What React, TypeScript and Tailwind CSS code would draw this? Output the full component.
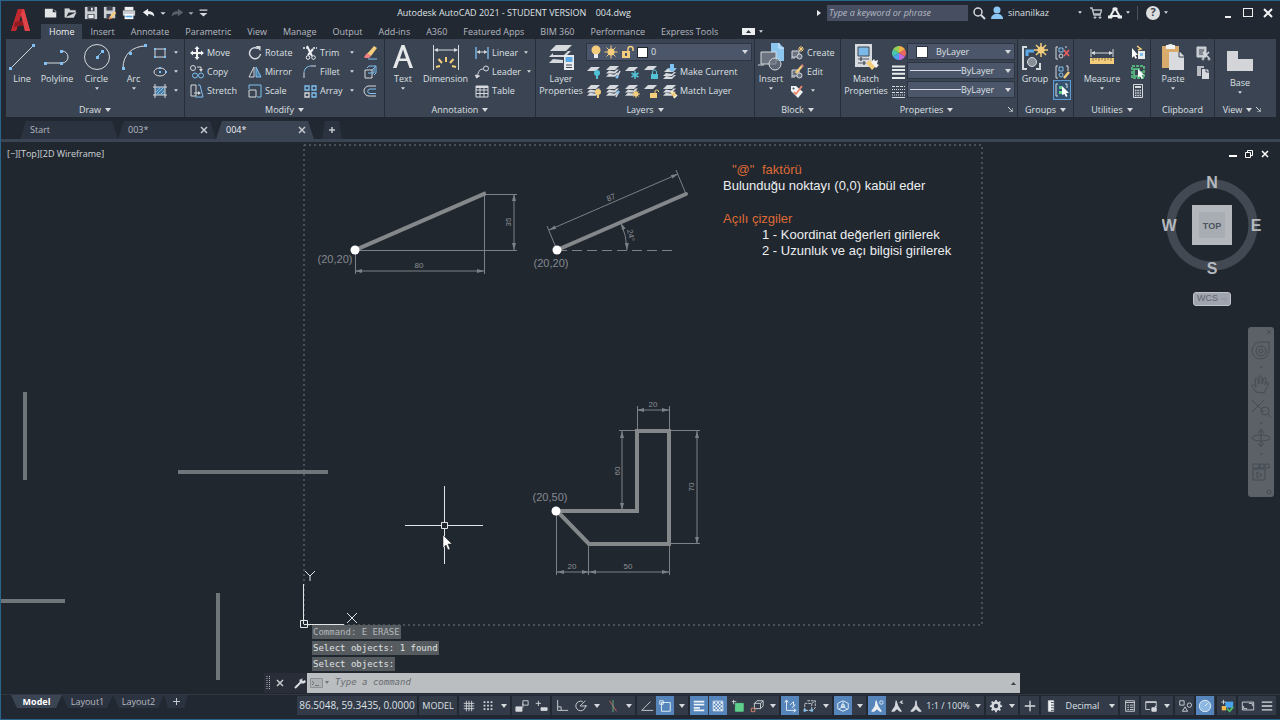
import type { ReactNode } from 'react';
import clsx from 'clsx';

const LIGHT = '#d6d9dd';
const BLUE = '#7fc1f2';
const GOLD = '#f3cd7c';
const GREEN = '#5fd08b';

const layerStack = (
  <g fill={LIGHT}>
    <path d="M5 2h9l-4 4H1z" />
    <path d="M4 6.500l-3 3h9l4-4h-2.500l-2 2z" />
    <path d="M4 9.800l-3 3h9l4-4h-2.500l-2 2z" />
  </g>
);

const smallIcons: Record<string, ReactNode> = {
  rect: (
    <g>
      <path d="M3 4h10v8H3z" fill="none" stroke={LIGHT} />
      <path d="M2 3h2v2H2zM12 11h2v2h-2zM12 3h2v2h-2zM2 11h2v2H2z" fill={BLUE} />
    </g>
  ),
  ellipse: (
    <g>
      <ellipse cx="8" cy="8" rx="6" ry="4" fill="none" stroke={LIGHT} />
      <path d="M7 7h2v2H7zM13 7h2v2h-2zM7 3h2v2H7z" fill={BLUE} />
    </g>
  ),
  hatch: (
    <g fill="none">
      <path d="M3 4h10v8H3z" fill="#4c7ba0" />
      <path d="M3 1v14M13 1v14M1 4h14M1 12h14" stroke={LIGHT} />
      <path d="M4 9l4-4M5 11l6-6M9 11l3-3" stroke={BLUE} />
    </g>
  ),
  move: (
    <path d="M8 1l2.500 3H9v3h3V5.500L15 8l-3 2.500V9H9v3h1.500L8 15l-2.500-3H7V9H4v1.500L1 8l3-2.500V7h3V4H5.500z" fill="#f0f2f4" />
  ),
  copy: (
    <g fill="none">
      <circle cx="4" cy="4" r="2.500" stroke={LIGHT} />
      <path d="M8 3h4v3" stroke={LIGHT} />
      <path d="M10 5h4l-2 3z" fill={LIGHT} />
      <circle cx="6" cy="11.500" r="2.500" stroke={BLUE} />
      <circle cx="12" cy="11.500" r="2.500" stroke={BLUE} />
    </g>
  ),
  stretch: (
    <g fill="none">
      <path d="M2 2h5v11H2z" stroke={LIGHT} />
      <path d="M9 2h2l3 12H6" stroke={BLUE} />
      <path d="M5 10h5" stroke={LIGHT} />
      <path d="M9 8l3 2-3 2z" fill={LIGHT} />
    </g>
  ),
  rotate: (
    <g fill="none">
      <path d="M11 3.500A5.500 5.500 0 1 0 13.500 9" stroke={LIGHT} strokeWidth="1.500" />
      <path d="M8.500 1h5v5z" fill={LIGHT} />
    </g>
  ),
  mirror: (
    <g fill="none">
      <path d="M7 3v10H2z" stroke={LIGHT} />
      <path d="M9 3v10h5z" fill="#4c7ba0" stroke={BLUE} />
    </g>
  ),
  scale: (
    <g fill="none">
      <path d="M2 6V2h12v12h-4" stroke={BLUE} />
      <path d="M2 7h7v7H2z" stroke={LIGHT} />
    </g>
  ),
  trim: (
    <g fill="none" stroke="#f0f2f4">
      <path d="M1 3h4M11 3h4" strokeWidth="1.500" strokeDasharray="2 1" />
      <path d="M5 1l5 10M11 4L6 10" strokeWidth="2" />
      <circle cx="6" cy="12.500" r="1.800" />
      <circle cx="11.500" cy="12.500" r="1.800" />
    </g>
  ),
  fillet: (
    <g fill="none">
      <path d="M2 14V9" stroke={LIGHT} />
      <path d="M2 9c0-4 3-7 7-7" stroke={BLUE} />
      <path d="M9 2h5" stroke={LIGHT} />
    </g>
  ),
  array: (
    <g fill="none">
      <path d="M3 3h4v4H3zM10 10h4v4h-4zM10 3h4v4h-4z" stroke={BLUE} strokeWidth="1.300" />
      <path d="M3 10h4v4H3z" stroke={LIGHT} strokeWidth="1.300" />
    </g>
  ),
  erase: (
    <g>
      <path d="M12 1l3 2-6 8-4-2z" fill={GOLD} />
      <path d="M5 8l4 3-2 2H3l-1-1z" fill="#ef8080" />
      <path d="M6 14h9" stroke={BLUE} />
    </g>
  ),
  explode: (
    <g fill="none">
      <path d="M5 4l2-2h7v7l-2 2" stroke={BLUE} />
      <path d="M3 6h7v8H3z" stroke={LIGHT} />
      <path d="M6 9h6V4" stroke={BLUE} />
      <path d="M10 6l4-4" stroke={BLUE} />
    </g>
  ),
  offset: (
    <g fill="none">
      <path d="M14 3H7a5 5 0 0 0 0 10h7" stroke={LIGHT} />
      <path d="M14 6H8a2 2 0 0 0 0 4.500h6" stroke={BLUE} />
    </g>
  ),
  linear: (
    <g fill="none">
      <path d="M2 2v12M14 2v12" stroke={BLUE} strokeWidth="1.300" />
      <path d="M3 7h10" stroke={LIGHT} />
      <path d="M3 7l3-2v4zM13 7l-3-2v4z" fill={LIGHT} />
    </g>
  ),
  leader: (
    <g fill="none" stroke={LIGHT}>
      <circle cx="12" cy="4.500" r="2.500" />
      <path d="M9.500 5c-4 0-5 2-6 7" />
      <path d="M1.500 11l1 3 3-2z" fill={LIGHT} />
    </g>
  ),
  table: (
    <g fill="none" stroke={LIGHT}>
      <path d="M2 3h12v11H2zM2 7h12M2 10.500h12M6 5v9M10 5v9" />
      <path d="M2 4h12" strokeWidth="2" />
    </g>
  ),
  layerOff: (
    <g>
      <path d="M5 3h9l-4 4H1z" fill={LIGHT} />
      <circle cx="11" cy="9" r="3" fill="#52c3d6" />
      <path d="M10 12h2v3h-2z" fill="#52c3d6" />
    </g>
  ),
  layerIso: (
    <g>
      {layerStack}
      <path d="M15 7l-3 6" stroke={LIGHT} strokeWidth="1.500" />
      <circle cx="12" cy="13" r="1.500" fill={BLUE} />
    </g>
  ),
  layerFreeze: (
    <g>
      <path d="M5 3h9l-4 4H1z" fill={LIGHT} />
      <path d="M11 7v8M7.500 9l7 4M14.500 9l-7 4" stroke="#52c3d6" strokeWidth="1.500" />
    </g>
  ),
  layerLock: (
    <g>
      <path d="M5 2h9l-4 4H1z" fill={LIGHT} />
      <path d="M8 10h7v5H8z" fill="#52c3d6" />
      <path d="M9.500 10V8a2 2 0 0 1 4 0v2" fill="none" stroke="#52c3d6" />
    </g>
  ),
  makeCurrent: (
    <g>
      <path d="M5 5h9l-3 3H2zM4 9l-3 3h9l4-4h-2l-2 2zM4 12l-3 3h9l4-4h-2l-2 2z" fill={LIGHT} />
      <path d="M8 0h4v4h3l-5 4-5-4h3z" fill={BLUE} />
    </g>
  ),
  layerOn: (
    <g>
      {layerStack}
      <circle cx="12" cy="9" r="3" fill={GOLD} />
      <path d="M11 12h2v3h-2z" fill={GOLD} />
    </g>
  ),
  layerUniso: (
    <g>
      {layerStack}
      <path d="M14 8l-3 6" stroke={LIGHT} strokeWidth="1.500" />
      <circle cx="13" cy="9" r="1.500" fill={BLUE} />
    </g>
  ),
  layerThaw: (
    <g>
      {layerStack}
      <circle cx="12" cy="11" r="2.500" fill={GOLD} />
      <path d="M12 7v8M8 11h8M9.500 8.500l5 5M14.500 8.500l-5 5" stroke={GOLD} />
    </g>
  ),
  layerUnlock: (
    <g>
      <path d="M5 2h9l-4 4H1z" fill={LIGHT} />
      <path d="M7 10h7v5H7z" fill={GOLD} />
      <path d="M12 10V8a2 2 0 0 1 3.500 0v1" fill="none" stroke={GOLD} />
    </g>
  ),
  matchLayer: (
    <g>
      {layerStack}
      <path d="M8 9l3-1 4 4-3 3z" fill={GOLD} />
      <path d="M9 8l2 2M12 15l3-3" stroke="#f6f1e4" strokeWidth="1.500" />
    </g>
  ),
  create: (
    <g fill="none">
      <path d="M3 6h7v6H3z" stroke={LIGHT} fill="#6b7380" />
      <circle cx="10.500" cy="11.500" r="2.500" stroke={LIGHT} fill="#6b7380" />
      <path d="M2 13h4" stroke={LIGHT} />
      <path d="M12 1v6M9 4h6M10 2l4 4M14 2l-4 4" stroke={GOLD} />
    </g>
  ),
  edit: (
    <g fill="none">
      <path d="M3 6h7v6H3z" stroke={LIGHT} fill="#6b7380" />
      <circle cx="10.500" cy="11.500" r="2.500" stroke={LIGHT} fill="#6b7380" />
      <path d="M2 13h4" stroke={LIGHT} />
      <path d="M7 9l6-7" stroke={GOLD} strokeWidth="2.500" />
      <path d="M13 2l1-1" stroke="#ef8080" strokeWidth="2.500" />
    </g>
  ),
  attribute: (
    <g>
      <path d="M2 3h5l7 6-5 6-7-7z" fill="#f0f2f4" />
      <path d="M5 9l2 2 6-8" fill="none" stroke="#ef8a6a" strokeWidth="1.800" />
      <circle cx="4.500" cy="5.500" r="1" fill="#3b4453" />
    </g>
  ),
  colorWheel: (
    <g>
      <path d="M8 8V1a7 7 0 0 1 6 3.500z" fill="#f2b24a" />
      <path d="M8 8l6-3.500a7 7 0 0 1 0 7z" fill="#ef6a5a" />
      <path d="M8 8l6 3.500A7 7 0 0 1 8 15z" fill="#c268d8" />
      <path d="M8 8v7a7 7 0 0 1-6-3.500z" fill="#4aa3ef" />
      <path d="M8 8l-6 3.500a7 7 0 0 1 0-7z" fill="#48c8b0" />
      <path d="M8 8L2 4.500A7 7 0 0 1 8 1z" fill="#8ed05a" />
    </g>
  ),
  lineweight: <path d="M1 2.500h13M1 6h13M1 9.800h13M1 14h13" stroke="#e9ebed" strokeWidth="2" />,
  linetype: (
    <g stroke={LIGHT}>
      <path d="M1 3.500h13M1 9.500h13" strokeDasharray="3 1" />
      <path d="M1 6.500h13M1 12h13" strokeDasharray="1 1" />
      <path d="M1 14.500h13" />
    </g>
  ),
  ungroup: (
    <g fill="none">
      <path d="M4 2H2v12h2M11 2h2" stroke={LIGHT} />
      <path d="M5 3h4v4H5z" stroke={BLUE} />
      <circle cx="7" cy="11" r="2" stroke={LIGHT} />
      <path d="M10 5l5 6M15 5l-5 6" stroke="#ef5f5f" strokeWidth="1.500" />
    </g>
  ),
  groupEdit: (
    <g fill="none">
      <path d="M4 2H2v12h2M12 2h2v5" stroke={LIGHT} />
      <path d="M5 3h4v4H5z" stroke={BLUE} />
      <circle cx="7" cy="11" r="2" stroke={BLUE} />
      <path d="M10 14l5-6" stroke={GOLD} strokeWidth="2.500" />
    </g>
  ),
  groupSelect: (
    <g fill="none">
      <path d="M4 2H2v12h2M11 2h2v4" stroke={LIGHT} />
      <path d="M5 4h3v3H5zM5 9h3v3H5z" fill={GREEN} />
      <path d="M8 4l7 7-3 0 1.500 3-1.500 1-1.500-3L8 13z" fill="#fff" />
    </g>
  ),
  quickSelect: (
    <g>
      <path d="M8 6h7v8H8z" fill="#e9ebed" />
      <path d="M10 8h3v3h-3z" fill={BLUE} />
      <path d="M2 3l6 7H5.500L7 13l-1.500.800L4 11l-2 2z" fill="#fff" />
      <path d="M7 1l4 3-3 1" fill="none" stroke={GOLD} strokeWidth="1.500" />
    </g>
  ),
  selectAll: (
    <g fill="none">
      <path d="M2 2h12v12H2z" stroke={GREEN} strokeWidth="1.500" strokeDasharray="3 1" />
      <path d="M4 5h5v3h3v4H4z" stroke={GREEN} strokeWidth="1.500" />
      <path d="M8 5l6 6h-2.500l1.500 3-1.500.800L10 12l-2 1.500z" fill="#fff" />
    </g>
  ),
  calculator: (
    <g fill="none" stroke={LIGHT}>
      <path d="M3.500 1.500h9v13h-9z" />
      <path d="M5 4h6" strokeWidth="2" />
      <path d="M5 7.500h6M5 10h6M5 12.500h6" strokeDasharray="1.500 .8" strokeWidth="1.500" />
    </g>
  ),
  cut: (
    <g fill="none" stroke={LIGHT}>
      <path d="M2 2h9v10H2z" fill="#c3c7cc" />
      <path d="M4 5h5M4 7h5M4 9h4" stroke="#3b4453" />
      <path d="M8 7l6 6M14 7l-6 6" strokeWidth="1.500" />
      <circle cx="14" cy="14" r="1" />
      <circle cx="8" cy="14" r="1" />
    </g>
  ),
  copyClip: (
    <g>
      <path d="M2 2h7v2H6v8H2z" fill="#b8bcc2" />
      <path d="M7 5h5l2 2v8H7z" fill={LIGHT} />
      <path d="M11 5v3h3" fill="none" stroke="#3b4453" />
    </g>
  ),
};

const bigIcons: Record<string, ReactNode> = {
  line: (
    <g>
      <path d="M2 26L26 2" stroke={LIGHT} />
      <path d="M1 24h3v3H1zM24 1h3v3h-3z" fill={BLUE} />
    </g>
  ),
  polyline: (
    <g fill="none">
      <path d="M2 20h17a6 6 0 0 0 0-12" stroke={LIGHT} />
      <path d="M1 19h3v3H1zM17 19h3v3h-3zM17 7h3v3h-3z" fill={BLUE} />
    </g>
  ),
  circle: (
    <g fill="none">
      <circle cx="14" cy="14" r="12.500" stroke={LIGHT} />
      <path d="M14 14l5-5" stroke={BLUE} />
      <path d="M13 13h3v3h-3zM18 7h3v3h-3z" fill={BLUE} />
    </g>
  ),
  arc: (
    <g fill="none">
      <path d="M3 25C3 12 12 3 26 3" stroke={LIGHT} />
      <path d="M2 24h3v3H2zM9 9h3v3H9zM24 1h3v3h-3z" fill={BLUE} />
    </g>
  ),
  text: <path d="M4 25L12.500 2h3L24 25h-3.500l-2.500-7H10l-2.500 7zM11 15.500h6L14 6.500z" fill="#e6e8ea" fillRule="evenodd" />,
  dimension: (
    <g fill="none">
      <path d="M1.500 2v25M26.500 2v25M3 7h22" stroke={LIGHT} />
      <path d="M2 7l4-2v4zM26 7l-4-2v4z" fill={LIGHT} />
      <path d="M14 19v-5M18 20l3.500-4M10 20l-3.500-4M20 23l4 1M8 23l-4 1" stroke={GOLD} strokeWidth="2" />
    </g>
  ),
  layerProps: (
    <g>
      <path d="M9 2h16l-6 6H3z" fill={LIGHT} />
      <path d="M6 10l-4 4h16l6-6h-3l-4 4H6z" fill={LIGHT} />
      <path d="M6 16l-4 4h14v-3z" fill={LIGHT} />
      <path d="M17 12h10v15H17z" fill="#e9ebed" />
      <path d="M18.500 14h7v5h-7z" fill="#5aa9e6" />
      <path d="M19 22h6M19 24.500h6" stroke="#3b4453" />
    </g>
  ),
  insert: (
    <g>
      <path d="M14 0h8l5 5v13H14z" fill="#8cc6ef" />
      <path d="M22 0v5h5" fill="none" stroke="#dbeefb" />
      <path d="M4 9h15v12H4z" fill="#6b7380" stroke={LIGHT} />
      <circle cx="18" cy="21" r="6" fill="#6b7380" fillOpacity=".7" stroke={LIGHT} />
      <path d="M1 22h6" stroke={LIGHT} />
    </g>
  ),
  matchProps: (
    <g>
      <path d="M3 1h17v23H3z" fill={LIGHT} />
      <path d="M6 4h11v9H6z" fill="#7db9e8" stroke="#3b4453" />
      <path d="M6 16h11M6 20h8" stroke="#4c5563" />
      <path d="M9 14v4M12 18v4" stroke="#4c5563" strokeWidth="1.500" />
      <path d="M14 20l4-3 6 6-4 4z" fill={GOLD} />
      <path d="M19 19l3-3 1 2 3-1-1 4 2 1-3 3z" fill="#f2f3f4" />
    </g>
  ),
  group: (
    <g fill="none">
      <path d="M6 4H2v22h4M15 26h4v-6" stroke={LIGHT} strokeWidth="2" />
      <path d="M6 13V8h7" stroke="#5aa9e6" strokeWidth="3" />
      <circle cx="11" cy="19" r="4.500" fill="#8a9099" stroke={LIGHT} />
      <path d="M20 0v14M13 7h14M15 2l10 10M25 2L15 12" stroke={GOLD} strokeWidth="1.500" />
      <circle cx="20" cy="7" r="3.500" fill={GOLD} />
    </g>
  ),
  measure: (
    <g fill="none">
      <path d="M3 6v8M25 6v8M4 10h20" stroke={LIGHT} />
      <path d="M3 10l4-2v4zM25 10l-4-2v4z" fill={LIGHT} />
      <path d="M2 15h24v6H2z" fill={GOLD} />
      <path d="M5 15v3M8 15v2M11 15v3M14 15v2M17 15v3M20 15v2M23 15v3" stroke="#8a7644" />
    </g>
  ),
  paste: (
    <g>
      <path d="M3 3h17v22H3z" fill="#d9ab6c" />
      <path d="M7 2h2a3 2 0 0 1 5 0h2v4H7z" fill="#f0f2f4" />
      <path d="M10 9h11l4 4v14H10z" fill="#d9dbde" />
      <path d="M20 9v5h5" fill="none" stroke="#3b4453" />
    </g>
  ),
  base: <path d="M1 4h11v8h15v12H1z" fill="#d3d5d8" />,
};

const Caret = ({ wide = false }: { wide?: boolean }) => (
  <svg width={wide ? 6 : 4} height={wide ? 4 : 3} viewBox="0 0 6 4" className="shrink-0" aria-hidden="true">
    <path d="M0 0h6L3 4z" fill="#d6d9dd" />
  </svg>
);

const Icon = ({ name }: { name: string }) => (
  <svg width="16" height="16" viewBox="0 0 16 16" className="size-4 shrink-0" aria-hidden="true">
    {smallIcons[name]}
  </svg>
);

interface SmallButtonProps {
  icon: string;
  label?: string;
  menu?: boolean;
  active?: boolean;
  title?: string;
}

const SmallButton = ({ icon, label, menu, active, title }: SmallButtonProps) => (
  <button
    type="button"
    aria-label={label ?? title}
    className={clsx(
      'flex items-center gap-0.5 whitespace-nowrap',
      active ? 'h-[18px] bg-[#35536f] outline outline-[#5f9bd0]' : 'h-[19px]'
    )}
  >
    <Icon name={icon} />
    {label && <span>{label}</span>}
    {menu && (
      <span className="ml-1 flex grow justify-end">
        <Caret />
      </span>
    )}
  </button>
);

interface BigButtonProps {
  icon: string;
  label: string;
  width: string;
  menu?: boolean;
  low?: boolean;
}

const BigButton = ({ icon, label, width, menu, low }: BigButtonProps) => (
  <button type="button" className={clsx('flex shrink-0 flex-col items-center', width, low && 'pt-1')}>
    <svg width="28" height="28" viewBox="0 0 28 28" className="size-7" aria-hidden="true">
      {bigIcons[icon]}
    </svg>
    <span className="mt-0.5 leading-3">{label}</span>
    {menu && (
      <span className="mt-0.5">
        <Caret />
      </span>
    )}
  </button>
);

interface PanelProps {
  title: string;
  width: string;
  menu?: boolean;
  launcher?: boolean;
  children: ReactNode;
}

const Panel = ({ title, width, menu = true, launcher, children }: PanelProps) => (
  <section className={clsx('flex shrink-0 flex-col border-[#272e3a] pt-1 not-last:border-r', width)}>
    <div className="flex h-[57px]">{children}</div>
    <div className="flex h-[17px] items-center px-1 pt-0.5">
      <button type="button" className="flex grow items-center justify-center gap-1">
        {title}
        {menu && <Caret wide />}
      </button>
      {launcher && (
        <svg width="5" height="5" viewBox="0 0 5 5" aria-hidden="true">
          <path d="M0 0l4 4M5 1v4H1" fill="none" stroke={LIGHT} />
        </svg>
      )}
    </div>
  </section>
);

const LinePicker = ({ label }: { label: string }) => (
  <div className="relative flex h-[17px] w-[108px] items-center border border-[#2d3542] bg-[#4b566a]">
    <span className="ml-0.5 h-px w-[51px] bg-[#d6d9dd]" />
    <select aria-label={label} className="w-[52px] grow appearance-none bg-transparent outline-none">
      <option>ByLayer</option>
      <option>ByBlock</option>
    </select>
    <span className="pointer-events-none absolute right-[3px]">
      <Caret wide />
    </span>
  </div>
);

const menuTabs = [
  'Home', 'Insert', 'Annotate', 'Parametric', 'View', 'Manage', 'Output', 'Add-ins',
  'A360', 'Featured Apps', 'BIM 360', 'Performance', 'Express Tools'
];

const quickTools: { name: string; width: string; art: ReactNode }[] = [
  { name: 'New', width: 'w-5', art: <path d="M1 3h9l4 3v7H1zM10 3v4h4" fill="#e2e4e6" /> },
  { name: 'Open', width: 'w-5', art: <path d="M1 13V3h5l1 2h6v2H5l-3 6h9l3-6" fill="#d0d3d6" stroke="#f0f1f2" strokeWidth=".5" /> },
  {
    name: 'Save',
    width: 'w-[19px]',
    art: (
      <g>
        <path d="M1 1h14v14H1z" fill="#c9ccd0" />
        <path d="M4 1h8v5H4zM4 9h8v6H4z" fill="#3c434e" />
        <path d="M5 10h6v4H5zM8 2h2v3H8z" fill="#e9ebed" />
      </g>
    )
  },
  {
    name: 'Save As',
    width: 'w-[19px]',
    art: (
      <g>
        <path d="M1 1h13v13H1z" fill="#c9ccd0" />
        <path d="M4 1h7v4H4zM4 9h5v5H4z" fill="#3c434e" />
        <path d="M8 14l6-7" stroke={GOLD} strokeWidth="3" />
        <path d="M7 15l2-2" stroke="#e07b52" strokeWidth="2" />
      </g>
    )
  },
  {
    name: 'Plot',
    width: 'w-5',
    art: (
      <g>
        <path d="M3 1h10v4H3z" fill="#eceef0" />
        <path d="M1 5h14v6H1z" fill="#c6cace" />
        <path d="M3 9h10v6H3z" fill="#fff" />
        <path d="M4 11h8v2H4z" fill="#5aa9e6" />
      </g>
    )
  },
  { name: 'Undo', width: 'w-5', art: <path d="M1 7l6-4v3c5 0 7 2 7 6-2-2-4-3-7-3v3z" fill="#eceef0" /> },
  { name: 'Undo list', width: 'w-2', art: <path d="M5 7h6L8 10z" fill="#d6d9dd" /> },
  { name: 'Redo', width: 'w-5', art: <path d="M15 7L9 3v3c-5 0-7 2-7 6 2-2 4-3 7-3v3z" fill="#59616d" /> },
  { name: 'Redo list', width: 'w-2', art: <path d="M5 7h6L8 10z" fill="#a5abb3" /> },
  { name: 'Customize', width: 'w-4', art: <path d="M4 4h9v1.500H4zM4 8h9l-4.500 4z" fill="#d6d9dd" /> }
];

const TitleBar = () => (
  <div className="flex h-[23px] items-center">
    <div className="flex pl-[7px]">
      {quickTools.map((tool) => (
        <button key={tool.name} type="button" aria-label={tool.name} className={clsx('flex h-4 items-center justify-center', tool.width)}>
          <svg width="14" height="14" viewBox="0 0 16 16" className="size-[14px] shrink-0" aria-hidden="true">
            {tool.art}
          </svg>
        </button>
      ))}
    </div>
    <h1 className="grow text-center text-[9px] whitespace-pre text-[#dfe2e5]">
      Autodesk AutoCAD 2021 - STUDENT VERSION{'    '}004.dwg
    </h1>
    <svg width="4" height="6" viewBox="0 0 4 6" className="mr-1.5 shrink-0" aria-hidden="true">
      <path d="M0 0l4 3-4 3z" fill="#e6e8ea" />
    </svg>
    <input
      aria-label="Search help"
      placeholder="Type a keyword or phrase"
      className="h-4 w-[141px] shrink-0 bg-[#474e61] px-0.5 text-[9px] italic outline-none placeholder:text-[#b5bac4]"
    />
    <div className="flex w-[312px] shrink-0 items-center">
      <button type="button" aria-label="Search" className="ml-1 flex w-[18px]">
        <svg width="14" height="14" viewBox="0 0 14 14" fill="none" stroke="#d6d9dd" aria-hidden="true">
          <circle cx="6" cy="6" r="4" strokeWidth="1.500" />
          <path d="M9 9l4 4" strokeWidth="2" />
        </svg>
      </button>
      <button type="button" className="flex w-[96px] items-center gap-1 text-[9px]">
        <svg width="14" height="14" viewBox="0 0 14 14" aria-hidden="true">
          <circle cx="7" cy="4" r="3.500" fill="#8cc6f5" />
          <path d="M1 13c0-3 2-5 6-5s6 2 6 5z" fill="#8cc6f5" />
        </svg>
        sinanilkaz
        <span className="ml-auto pr-1">
          <Caret />
        </span>
      </button>
      <button type="button" aria-label="App store" className="flex w-5 justify-center">
        <svg width="12" height="12" viewBox="0 0 12 12" fill="none" stroke="#b9bec5" aria-hidden="true">
          <path d="M0 1h2l2 7h7M3 3h9l-2 4H4" strokeWidth="1.500" />
          <path d="M4 10h2v1H4zM9 10h2v1H9z" fill="#b9bec5" />
        </svg>
      </button>
      <button type="button" aria-label="Autodesk account" className="flex w-[31px] items-center gap-1 pl-0.5">
        <svg width="14" height="12" viewBox="0 0 14 12" fill="none" stroke="#eceef0" aria-hidden="true">
          <path d="M7 1L2 10M7 1l5 9M3 9h8" strokeWidth="2" />
          <path d="M5 1h4v2H5zM0 9h4v2H0zM10 9h4v2h-4z" fill="#eceef0" />
        </svg>
        <Caret />
      </button>
      <button type="button" aria-label="Help" className="flex items-center gap-1 border-l border-[#4a515c] pl-2">
        <span className="flex size-3.5 items-center justify-center rounded-full bg-[#dcdee0] text-[11px] font-bold text-[#39404b]">?</span>
        <Caret />
      </button>
      <div className="ml-auto flex gap-2 pr-1.5">
        <button type="button" aria-label="Minimize" className="flex size-3 items-end justify-center pb-px">
          <span className="h-0.5 w-1.5 bg-[#eceef0]" />
        </button>
        <button type="button" aria-label="Maximize" className="size-3 p-px">
          <span className="block h-[9px] w-[10px] border border-[#eceef0]" />
        </button>
        <button type="button" aria-label="Close" className="size-3">
          <svg width="12" height="12" viewBox="0 0 12 12" aria-hidden="true">
            <path d="M2 2l8 8M10 2l-8 8" stroke="#f4f5f6" strokeWidth="2" />
          </svg>
        </button>
      </div>
    </div>
  </div>
);

const Header = () => (
  <header className="flex h-[38px]">
    <button type="button" aria-label="Application menu" className="flex w-[33px] shrink-0 items-start pt-[7px] pl-[9px]">
      <svg width="22" height="24" viewBox="0 0 22 24" aria-hidden="true">
        <path d="M8 1h6l6 22h-5l-4-16-5 16H1z" fill="#d8333a" />
        <path d="M8 1h4L6 23H1z" fill="#c0282f" />
        <path d="M5 14l10-2 1 5-12 2z" fill="#8e1a22" />
        <path d="M14 1l6 22h-5l-4-17z" fill="#e0454a" />
      </svg>
    </button>
    <div className="flex grow flex-col">
      <TitleBar />
      <nav aria-label="Ribbon tabs" className="flex h-[15px] items-center pl-[7px]">
        {menuTabs.map((tab) => (
          <button
            key={tab}
            type="button"
            className={clsx('h-[15px] px-2 whitespace-nowrap', tab === 'Home' ? 'bg-[#3b4453] text-[#f0f2f4]' : 'text-[#b4b9c1]')}
          >
            {tab}
          </button>
        ))}
        <button type="button" aria-label="Minimize ribbon" className="ml-4 flex items-center gap-1">
          <svg width="13" height="7" viewBox="0 0 13 7" aria-hidden="true">
            <path d="M0 0h13v7H0z" fill="#eceef0" />
            <path d="M4 5h5L6.500 2z" fill="#2a303b" />
          </svg>
          <Caret />
        </button>
      </nav>
    </div>
  </header>
);

const layerTools = [
  ['layerOff', 'layerIso', 'layerFreeze', 'layerLock', 'makeCurrent'],
  ['layerOn', 'layerUniso', 'layerThaw', 'layerUnlock', 'matchLayer']
];

const Ribbon = () => (
  <div className="mr-1 ml-[5px] flex bg-[#3b4453]">
    <Panel title="Draw" width="w-[179px]">
      <BigButton icon="line" label="Line" width="w-8" />
      <BigButton icon="polyline" label="Polyline" width="w-[38px]" />
      <BigButton icon="circle" label="Circle" width="w-[41px]" menu />
      <BigButton icon="arc" label="Arc" width="w-[33px]" menu />
      <div className="flex w-7 flex-col pl-0.5">
        <SmallButton icon="rect" title="Rectangle" menu />
        <SmallButton icon="ellipse" title="Ellipse" menu />
        <SmallButton icon="hatch" title="Hatch" menu />
      </div>
    </Panel>
    <Panel title="Modify" width="w-[200px]">
      <div className="grid grid-cols-[58px_55px_60px_16px] pl-1">
        <SmallButton icon="move" label="Move" />
        <SmallButton icon="rotate" label="Rotate" />
        <div className="grid pr-2"><SmallButton icon="trim" label="Trim" menu /></div>
        <SmallButton icon="erase" title="Erase" />
        <SmallButton icon="copy" label="Copy" />
        <SmallButton icon="mirror" label="Mirror" />
        <div className="grid pr-2"><SmallButton icon="fillet" label="Fillet" menu /></div>
        <SmallButton icon="explode" title="Explode" />
        <SmallButton icon="stretch" label="Stretch" />
        <SmallButton icon="scale" label="Scale" />
        <div className="grid pr-2"><SmallButton icon="array" label="Array" menu /></div>
        <SmallButton icon="offset" title="Offset" />
      </div>
    </Panel>
    <Panel title="Annotation" width="w-[151px]">
      <BigButton icon="text" label="Text" width="w-9" menu />
      <BigButton icon="dimension" label="Dimension" width="w-[49px]" />
      <div className="flex w-[60px] flex-col items-start pl-1">
        <SmallButton icon="linear" label="Linear" menu />
        <SmallButton icon="leader" label="Leader" menu />
        <SmallButton icon="table" label="Table" />
      </div>
    </Panel>
    <Panel title="Layers" width="w-[219px]">
      <BigButton icon="layerProps" label="Layer Properties" width="w-[50px]" />
      <div className="flex grow flex-col pr-0.5">
        <div className="relative mb-px flex h-[18px] items-center gap-px border border-[#2d3542] bg-[#4b566a] pl-px">
          <svg width="46" height="16" viewBox="0 0 46 16" aria-hidden="true">
            <circle cx="8" cy="6" r="4.500" fill={GOLD} />
            <path d="M6 10h4v4H6z" fill="#e9ebed" />
            <circle cx="23" cy="8" r="3.500" fill={GOLD} />
            <path d="M23 1.500v13M16.500 8h13M18.500 3.500l9 9M27.500 3.500l-9 9" stroke={GOLD} />
            <path d="M34 7h8v7h-8z" fill={GOLD} />
            <path d="M40 7V5a2.500 2.500 0 0 1 5 0v2" fill="none" stroke={GOLD} strokeWidth="1.500" />
            <path d="M37 9h2v3h-2z" fill="#4b566a" />
          </svg>
          <span className="mx-0.5 size-[11px] border border-[#20252e] bg-white" />
          <select aria-label="Layer" className="grow appearance-none bg-transparent text-[9px] outline-none">
            <option>0</option>
            <option>Defpoints</option>
          </select>
          <span className="pointer-events-none absolute right-[3px]"><Caret wide /></span>
        </div>
        {layerTools.map((row, i) => (
          <div key={row[0]} className="flex gap-[3px]">
            {row.slice(0, 4).map((name) => <SmallButton key={name} icon={name} title={name} />)}
            <SmallButton icon={row[4]} label={i === 0 ? 'Make Current' : 'Match Layer'} />
          </div>
        ))}
      </div>
    </Panel>
    <Panel title="Block" width="w-[86px]">
      <BigButton icon="insert" label="Insert" width="w-8" menu />
      <div className="flex flex-col items-start pl-0.5">
        <SmallButton icon="create" label="Create" />
        <SmallButton icon="edit" label="Edit" />
        <SmallButton icon="attribute" title="Edit attributes" menu />
      </div>
    </Panel>
    <Panel title="Properties" width="w-[177px]" launcher>
      <BigButton icon="matchProps" label="Match Properties" width="w-[50px]" />
      <div className="flex w-4 flex-col">
        <SmallButton icon="colorWheel" title="Object color" />
        <SmallButton icon="lineweight" title="Lineweight" />
        <SmallButton icon="linetype" title="Linetype" />
      </div>
      <div className="flex flex-col gap-0.5">
        <div className="relative flex h-[17px] w-[108px] items-center border border-[#2d3542] bg-[#4b566a]">
          <span className="ml-2 size-3 border border-[#2d3542] bg-white" />
          <select aria-label="Object color" className="grow appearance-none bg-transparent pl-2 outline-none">
            <option>ByLayer</option>
            <option>ByBlock</option>
          </select>
          <span className="pointer-events-none absolute right-[3px]"><Caret wide /></span>
        </div>
        <LinePicker label="Lineweight" />
        <LinePicker label="Linetype" />
      </div>
    </Panel>
    <Panel title="Groups" width="w-[56px]">
      <BigButton icon="group" label="Group" width="w-[34px]" />
      <div className="flex flex-col pl-0.5">
        <SmallButton icon="ungroup" title="Ungroup" />
        <SmallButton icon="groupEdit" title="Group edit" />
        <SmallButton icon="groupSelect" title="Group selection" active />
      </div>
    </Panel>
    <Panel title="Utilities" width="w-[77px]">
      <BigButton icon="measure" label="Measure" width="w-14" menu />
      <div className="flex flex-col">
        <SmallButton icon="quickSelect" title="Quick select" />
        <SmallButton icon="selectAll" title="Select all" />
        <SmallButton icon="calculator" title="Quick calculator" />
      </div>
    </Panel>
    <Panel title="Clipboard" width="w-[64px]" menu={false}>
      <BigButton icon="paste" label="Paste" width="w-[44px]" menu />
      <div className="flex flex-col">
        <SmallButton icon="cut" title="Cut" />
        <SmallButton icon="copyClip" title="Copy to clipboard" />
      </div>
    </Panel>
    <Panel title="View" width="w-[50px]" launcher>
      <BigButton icon="base" label="Base" width="w-[50px]" menu low />
    </Panel>
  </div>
);

const fileTabs = [
  { name: 'Start', closable: false, active: false },
  { name: '003*', closable: true, active: false },
  { name: '004*', closable: true, active: true }
];

const Cross = () => (
  <svg width="8" height="8" viewBox="0 0 8 8" className="shrink-0" aria-hidden="true">
    <path d="M1 1l6 6M7 1L1 7" stroke="#c5c9ce" strokeWidth="1.500" />
  </svg>
);

const FileTabs = () => (
  <div className="mt-1 flex h-[18px] items-end pl-[19px]">
    {fileTabs.map((tab) => (
      <div
        key={tab.name}
        className={clsx(
          'flex h-[18px] w-[98px] items-center pr-2 pl-2.5 [clip-path:polygon(6px_0,calc(100%-6px)_0,100%_100%,0_100%)]',
          tab.active ? 'bg-[#3b4453] text-[#eef0f2]' : 'bg-[#2c3340] text-[#b4b9c1]'
        )}
      >
        <button type="button" className="grow text-left">{tab.name}</button>
        {tab.closable && (
          <button type="button" aria-label={`Close ${tab.name}`}>
            <Cross />
          </button>
        )}
      </div>
    ))}
    <button
      type="button"
      aria-label="New drawing"
      className="ml-2 flex h-[18px] w-5 items-center justify-center bg-[#2c3340] [clip-path:polygon(3px_0,calc(100%-3px)_0,100%_100%,0_100%)]"
    >
      <svg width="8" height="8" viewBox="0 0 8 8" aria-hidden="true">
        <path d="M4 1v6M1 4h6" stroke="#c5c9ce" strokeWidth="1.500" />
      </svg>
    </button>
  </div>
);

interface DimProps {
  x1: number;
  y1: number;
  x2: number;
  y2: number;
  value: string;
  tx: number;
  ty: number;
  angle?: number;
}

const Dim = ({ x1, y1, x2, y2, value, tx, ty, angle = 0 }: DimProps) => (
  <g>
    <line x1={x1} y1={y1} x2={x2} y2={y2} stroke="#7c8187" markerStart="url(#arrow)" markerEnd="url(#arrow)" />
    <text textAnchor="middle" transform={`translate(${tx} ${ty}) rotate(${angle})`} fontSize="8" fill="#8b9096">
      {value}
    </text>
  </g>
);

const Drawing = () => (
  <svg className="absolute inset-0 h-full w-full font-['Liberation_Sans',Arial,sans-serif]" role="img" aria-label="Drawing">
    <defs>
      <marker id="arrow" viewBox="0 0 7 4" refX="7" refY="2" markerWidth="7" markerHeight="4" orient="auto-start-reverse">
        <path d="M0 0l7 2-7 2z" fill="#7c8187" />
      </marker>
    </defs>
    <g transform="translate(-1 -139)" fill="none">
      <rect x="304" y="145" width="678" height="480" stroke="#747a82" strokeDasharray="2 3" />

      <g stroke="#6f7579" strokeWidth="4">
        <path d="M25 392v88M178 472h150M0 601h65M218 593v87" />
      </g>

      <path d="M355 250.500h162M484 194.500h33M484.500 194v80M355.500 250v24" stroke="#7c8187" />
      <path d="M355 250l129-56" stroke="#85888b" strokeWidth="4" strokeLinecap="square" />
      <Dim x1={355} y1={271} x2={484} y2={271} value="80" tx={419} ty={268} />
      <Dim x1={514} y1={194} x2={514} y2={250} value="35" tx={511} ty={222} angle={-90} />

      <path d="M557 250l-10-24M686 194l-10-24" stroke="#7c8187" />
      <path d="M557 250.500h118" stroke="#7c8187" strokeDasharray="10 5" />
      <path d="M557 250l129-56" stroke="#85888b" strokeWidth="4" strokeLinecap="round" />
      <path d="M621 223a70 70 0 0 1 6 27" stroke="#7c8187" markerStart="url(#arrow)" markerEnd="url(#arrow)" />
      <Dim x1={549} y1={230} x2={678} y2={174} value="87" tx={612} ty={200} angle={-23} />
      <text transform="translate(627 230) rotate(78)" fontSize="8" fill="#8b9096">24°</text>

      <path d="M637.500 406v25M669.500 406v25M619 430.500h18M669 430.500h31M669 543.500h31M556.500 511v64M588.500 544v31M669.500 544v31" stroke="#7c8187" />
      <path d="M557 511h80v-80h32v113h-80z" stroke="#85888b" strokeWidth="4" />
      <Dim x1={637} y1={410} x2={669} y2={410} value="20" tx={653} ty={407} />
      <Dim x1={622} y1={431} x2={622} y2={510} value="60" tx={620} ty={471} angle={-90} />
      <Dim x1={697} y1={431} x2={697} y2={544} value="70" tx={694} ty={487} angle={-90} />
      <Dim x1={557} y1={572} x2={589} y2={572} value="20" tx={572} ty={569} />
      <Dim x1={589} y1={572} x2={669} y2={572} value="50" tx={628} ty={569} />

      <g fill="#ffffff">
        <circle cx="355" cy="250" r="4.500" />
        <circle cx="557" cy="250" r="4.500" />
        <circle cx="556" cy="511" r="4.500" />
      </g>
      <g fill="#84898f" fontSize="11" textAnchor="middle">
        <text x="335" y="263">(20,20)</text>
        <text x="551" y="267">(20,20)</text>
        <text x="550" y="501">(20,50)</text>
      </g>

      <g fontSize="13" fill="#eceef0">
        <text x="732" y="174" fill="#dd6a35">"@"</text>
        <text x="762" y="174" fill="#dd6a35">faktörü</text>
        <text x="723" y="190">Bulunduğu noktayı (0,0) kabül eder</text>
        <text x="723" y="223" fill="#dd6a35">Açılı çizgiler</text>
        <text x="762" y="239">1 - Koordinat değerleri girilerek</text>
        <text x="762" y="255">2 - Uzunluk ve açı bilgisi girilerek</text>
      </g>

      <g stroke="#e2e5e8">
        <path d="M303.500 584v40M304 624.500h40M300.500 620.500h7v7h-7z" />
        <path d="M305 571l5 5 5-5M310 576v5M347 613l10 10M357 613l-10 10" />
        <path d="M405 525.500h36M448 525.500h35M444.500 486v36M444.500 528v36M441.500 522.500h6v6h-6z" />
      </g>
      <path d="M443 535v13l3-3 2 5 2-1-2-5h4z" fill="#ffffff" stroke="#15191f" strokeWidth=".5" />
    </g>
  </svg>
);

const ViewCube = () => (
  <div className="absolute top-[34px] right-[18px] flex flex-col items-center">
    <svg width="100" height="106" viewBox="0 0 100 106" className="font-['Liberation_Sans',Arial,sans-serif]" role="img" aria-label="View cube">
      <circle cx="50" cy="52" r="41" fill="none" stroke="#424952" strokeWidth="9" />
      <path d="M30 32h40v40H30z" fill="#b4b7bb" />
      <path d="M37 39h26v26H37z" fill="#a8adb4" />
      <g fontWeight="bold" fontSize="16" fill="#b4b8bd" textAnchor="middle">
        <text x="50" y="15">N</text>
        <text x="50" y="101">S</text>
        <text x="7" y="58">W</text>
        <text x="94" y="58">E</text>
      </g>
      <text x="50" y="56" fontWeight="bold" fontSize="9" fill="#4d545e" textAnchor="middle">TOP</text>
    </svg>
    <button type="button" className="mt-[13px] flex h-[14px] w-[38px] items-center gap-1 rounded-[3px] border border-[#c0c3c9] bg-[#a0a4ae] px-[3px] font-['Liberation_Sans',Arial,sans-serif] text-[9px] text-[#5f6570]">
      WCS
      <svg width="6" height="3" viewBox="0 0 6 3" aria-hidden="true">
        <path d="M0 0l3 2 3-2" fill="none" stroke="#868b95" />
      </svg>
    </button>
  </div>
);

const NavigationBar = () => (
  <div className="absolute top-[188px] right-1.5 h-[170px] w-[26px] rounded-[3px] bg-[#5b6166]">
    <svg width="26" height="170" viewBox="0 0 26 170" fill="none" stroke="#454b52" role="img" aria-label="Navigation bar">
      <path d="M19 3l4 4M23 3l-4 4" />
      <path d="M13 15h8v9a8.500 8.500 0 1 1-8-9z" />
      <circle cx="13" cy="24" r="5" />
      <circle cx="13" cy="24" r="2" />
      <path d="M8 65l-4-6c0-2 2-2 3 0l1 1-1-8c1-2 2-1 3 1l1 4V50c1-2 2-1 3 0v7l2-6c1-1 2 0 2 1l-1 6 2-3c2 0 2 1 1 3l-4 8z" />
      <path d="M4 73l12 12M16 73L4 85" />
      <circle cx="17" cy="84" r="4" />
      <path d="M20 87l3 3M13 103v16M10 106l3-4 3 4M10 116l3 4 3-4" />
      <ellipse cx="13" cy="111" rx="9" ry="3" />
      <path d="M5 137h6v4H5zM12 137h4v4h-4zM17 137h4v4h-4zM5 142h12v11H5zM9 145l5 3-5 3z" />
      <circle cx="21" cy="165" r="2" />
      <path d="M12 40h3M12 96h3M12 127h3" />
    </svg>
  </div>
);

const commandHistory = ['Command: E ERASE', 'Select objects: 1 found', 'Select objects:'];

const CommandLine = () => (
  <div className="absolute right-[260px] bottom-px left-[263px] font-['DejaVu_Sans_Mono','Liberation_Mono',monospace] text-[9px]">
    <div className="flex flex-col items-start gap-0.5 pb-0.5 pl-12">
      {commandHistory.map((line, i) => (
        <p key={line} className={clsx('h-[14px] bg-[#555b5f] px-px leading-[14px]', i === 0 ? 'text-[#b4b8bc]' : 'text-[#e0e2e4]')}>
          {line}
        </p>
      ))}
    </div>
    <div className="flex h-5 bg-[#282d37]">
      <div className="flex w-[43px] shrink-0 items-center gap-1.5 pl-0.5">
        <svg width="4" height="14" viewBox="0 0 4 14" aria-hidden="true">
          <path d="M1 0v14M3.500 0v14" stroke="#b4b9c0" strokeDasharray="1 1" />
        </svg>
        <button type="button" aria-label="Close command line" className="flex">
          <Cross />
        </button>
        <button type="button" aria-label="Customize" className="ml-1 flex">
          <svg width="12" height="12" viewBox="0 0 12 12" aria-hidden="true">
            <path d="M1 11l6-6M6.500 2.500v3h3L11.500 4" fill="none" stroke="#d6d9dd" strokeWidth="2" />
            <path d="M6 3l3-2-1 2 1 1 2-1-1 3H7z" fill="#d6d9dd" />
          </svg>
        </button>
      </div>
      <label className="flex grow items-center gap-1.5 bg-[#bbbec0] pr-1 pl-[3px]">
        <svg width="19" height="10" viewBox="0 0 19 10" aria-hidden="true">
          <path d="M.5.500h12v9H.500z" fill="#aeb1b4" stroke="#8d9196" />
          <path d="M2 3l2 2-2 2M5 7.500h4" fill="none" stroke="#6f7479" />
          <path d="M15 3h4l-2 3z" fill="#6f7479" />
        </svg>
        <input
          aria-label="Command"
          placeholder="Type a command"
          className="grow bg-transparent italic outline-none placeholder:text-[#686c70]"
        />
        <svg width="5" height="3" viewBox="0 0 5 3" aria-hidden="true">
          <path d="M0 3h5L2.500 0z" fill="#3b4048" />
        </svg>
      </label>
    </div>
  </div>
);

const Canvas = () => (
  <main className="relative min-h-[553px] grow overflow-hidden border-t-[3px] border-[#3b4453] bg-[#21272f]">
    <div className="absolute inset-x-0 -top-[3px] bottom-0">
      <Drawing />
      <div className="relative flex items-center justify-between pt-2 pr-[11px] pl-1.5 text-[9px] text-[#d0d4d8]">
        <button type="button">[−][Top][2D Wireframe]</button>
        <div className="flex items-center gap-2">
          <svg width="8" height="8" viewBox="0 0 8 8" aria-hidden="true"><path d="M0 6h8" stroke="#fff" strokeWidth="2" /></svg>
          <svg width="8" height="8" viewBox="0 0 8 8" fill="none" stroke="#fff" aria-hidden="true"><path d="M2.500 2V.5h5v5H6M.5 2.500h5v5h-5z" /></svg>
          <svg width="8" height="8" viewBox="0 0 8 8" aria-hidden="true"><path d="M1 1l6 6M7 1L1 7" stroke="#fff" strokeWidth="1.500" /></svg>
        </div>
      </div>
      <ViewCube />
      <NavigationBar />
      <CommandLine />
    </div>
  </main>
);

type StatusItem = { id: string; on?: boolean; art?: ReactNode; text?: string; width?: string };

const more = (id: string): StatusItem => ({ id });

const statusGroups: StatusItem[][] = [
  [{ id: 'coordinates', text: '86.5048, 59.3435, 0.0000', width: 'w-[120px] text-[10px]' }],
  [{ id: 'model', text: 'MODEL', width: 'w-[38px] text-[9px]' }],
  [
    { id: 'grid', art: <path d="M2 5h12M2 8h12M2 11h12M5 2v12M8 2v12M11 2v12" /> },
    { id: 'snap', art: <path d="M3 3.500h11M3 7.500h11M3 11.500h11" strokeWidth="2" strokeDasharray="2 2" /> },
    more('snap menu')
  ],
  [
    { id: 'infer', art: <g><path d="M1 9h7v5H1z" fill="#d6d9dd" /><path d="M9 2h6v5H9zM9 5v5" /></g> },
    { id: 'dynamic input', art: <path d="M5 2v6M2 5h6M8 10h7v3H8z" fill="#d6d9dd" /> }
  ],
  [
    { id: 'ortho', art: <path d="M3 1v12h12M3 9h4v4" /> },
    { id: 'polar', art: <path d="M13 7a5.500 5.500 0 1 1-3-4M7 8h8M7 8l6-6" /> },
    more('polar menu'),
    { id: 'isodraft', art: <g><path d="M4 2l8 12" stroke="#d86a5a" /><path d="M8 1v14" stroke="#6fb98a" /></g> },
    more('isodraft menu')
  ],
  [
    { id: 'tracking', art: <path d="M2 13h13M2 13L12 3" /> },
    { id: 'object snap', on: true, art: <path d="M4 4h10v10H4zM2 2h4v4H2z" /> },
    more('snap options')
  ],
  [
    { id: 'lineweight', on: true, art: <path d="M2 3h12M2 6.500h12M2 10h7M2 13h12" strokeWidth="2" /> },
    {
      id: 'transparency',
      on: true,
      art: (
        <g>
          <path d="M2.500 2.500h11v11h-11z" />
          <path d="M3 4.500h10M3 8.500h10M3 12.500h10" strokeWidth="2" strokeDasharray="2 2" />
          <path d="M5 6.500h8M5 10.500h8" strokeWidth="2" strokeDasharray="2 2" />
        </g>
      )
    },
    { id: 'selection cycling', art: <g><path d="M5 5h9v9H5z" fill={GREEN} stroke={GREEN} /><path d="M3 1v5M1 3h5" /></g> },
    { id: '3d snap', art: <g><path d="M5 5l3-3h7v6l-3 3H5zM5 5h7v6M12 5l3-3" /><path d="M1.500 10.500h4v4h-4z" stroke="#e28a6a" /></g> },
    more('3d snap menu')
  ],
  [
    { id: 'dynamic ucs', on: true, art: <path d="M4 2v11h10M2 4l2-3 2 3M12 11l3 2-3 2M8 7l4-4v4h2l-4 3" /> },
    { id: 'selection filter', art: <g><path d="M2 5h8v8H2zM5 2h9v8l-3 3M10 5l4-3" strokeDasharray="3 1" /><path d="M1 12h2v2H1zM9 12h2v2H9z" fill={BLUE} stroke={BLUE} /></g> },
    more('filter menu')
  ],
  [
    { id: 'gizmo', on: true, art: <g><path d="M8 2l6 3v6l-6 3-6-3V5zM8 3v5l-5 4M8 8l5 4" /><circle cx="8" cy="8" r="2" /></g> },
    more('gizmo menu')
  ],
  [
    { id: 'annotation visibility', on: true, art: <g><path d="M7 2L6 8l-4 6h3l3-3 3 3h2L9 8z" fill="#eceef0" /><circle cx="13" cy="4" r="2" /></g> },
    { id: 'auto scale', art: <path d="M7 2L6 8l-4 6h3l3-3 3 3h2L9 8zM11 4l3-2-1 3h2" fill="#d6d9dd" /> },
    { id: 'annotation scale', art: <path d="M8 2L7 8l-5 6h3l3-3 3 3h3L9 8z" fill="#d6d9dd" /> },
    { id: 'scale', text: '1:1 / 100%', width: 'w-[46px] text-[9px]' },
    more('scale menu')
  ],
  [
    {
      id: 'workspace',
      art: (
        <g>
          <circle cx="8" cy="8" r="4" strokeWidth="3" />
          <path d="M8 1v3M8 12v3M1 8h3M12 8h3M3 3l2 2M11 11l2 2M13 3l-2 2M5 11l-2 2" strokeWidth="2" />
        </g>
      )
    },
    more('workspace menu')
  ],
  [{ id: 'annotation monitor', art: <path d="M8 2v12M2 8h12" strokeWidth="1.500" /> }],
  [
    { id: 'units', art: <g><path d="M5 2h6v12H5z" fill="#eceef0" /><path d="M8 4h3M8 7h3M8 10h3M8 13h3" stroke="#333b49" /></g> },
    { id: 'decimal', text: 'Decimal', width: 'w-[45px] text-[9px]' },
    more('units menu')
  ],
  [{ id: 'quick properties', art: <path d="M3 2h10v12H3zM3 4h10M5 7h2M8 7h4M5 9.500h2M8 9.500h4M5 12h2M8 12h4" /> }],
  [
    { id: 'lock ui', art: <g><path d="M7 12H2V3h12v4M2 4h12" /><path d="M9 10h5v4H9zM13 10V8h2" fill="#d6d9dd" /></g> },
    more('lock menu')
  ],
  [{ id: 'isolate', art: <g><path d="M2 2h5v5H2zM8 9l3 5H5z" /><circle cx="13" cy="7" r="2.500" /></g> }],
  [{ id: 'hardware', on: true, art: <g><circle cx="8" cy="8" r="6.500" fill="#8db8e2" /><path d="M8 8l3-3" /></g> }],
  [
    {
      id: 'clean screen',
      art: (
        <g>
          <path d="M6 3h9v7H6z" fill="#4aa3ef" stroke="none" />
          <path d="M2 8h5v5H2z" fill="#f0b84a" stroke="none" />
          <path d="M4 1v5M1.500 3.500h5" />
          <path d="M8 11l3 3 4-5" stroke="#4fc06a" strokeWidth="2" />
        </g>
      )
    }
  ],
  [
    { id: 'full screen', art: <path d="M1.500 3.500h13v9h-13zM9 5h4v3M3 8v3h4" /> },
    { id: 'customization', art: <path d="M2 3.500h12M2 8h12M2 12.500h12" strokeWidth="1.500" /> }
  ]
];

const StatusBar = () => (
  <footer className="flex h-[25px] justify-between border-t border-[#303743] pr-1 pl-2.5">
    <nav aria-label="Layouts" className="flex h-[13px] text-[9px]">
      {['Model', 'Layout1', 'Layout2'].map((name) => (
        <button
          key={name}
          type="button"
          className={clsx(
            'h-[13px] w-[51px] leading-3 [clip-path:polygon(0_0,100%_0,calc(100%-6px)_100%,6px_100%)]',
            name === 'Model' ? 'bg-[#3b4453] font-bold text-white' : 'bg-[#2c3340] text-[#b4b9c1]'
          )}
        >
          {name}
        </button>
      ))}
      <button type="button" aria-label="New layout" className="flex w-6 items-center justify-center bg-[#2c3340] [clip-path:polygon(0_0,100%_0,calc(100%-4px)_100%,4px_100%)]">
        <svg width="7" height="7" viewBox="0 0 7 7" aria-hidden="true"><path d="M3.500 0v7M0 3.500h7" stroke="#c5c9ce" /></svg>
      </button>
    </nav>
    <div className="flex gap-0.5 pt-px">
      {statusGroups.map((group) => (
        <div key={group[0].id} className="flex h-[19px] bg-[#333b49]">
          {group.map((item) =>
            item.text ? (
              <button key={item.id} type="button" className={clsx('text-center whitespace-nowrap', item.width)}>
                {item.text}
              </button>
            ) : (
              <button
                key={item.id}
                type="button"
                aria-label={item.id}
                className={clsx('flex items-center justify-center', item.art ? 'w-[19px]' : 'w-[13px]', item.on && 'border-r border-[#333b49] bg-[#5585bb]')}
              >
                {item.art ? (
                  <svg width="14" height="14" viewBox="0 0 16 16" fill="none" stroke={item.on ? '#eef3f8' : LIGHT} aria-hidden="true">
                    {item.art}
                  </svg>
                ) : (
                  <Caret wide />
                )}
              </button>
            )
          )}
        </div>
      ))}
    </div>
  </footer>
);

export default function App() {
  return (
    <div className="flex min-h-screen flex-col border-t border-b border-l border-[#28648b] bg-[#222831] font-['Open_Sans','Noto_Sans',sans-serif] text-[9px] text-[#dde0e4]">
      <Header />
      <Ribbon />
      <FileTabs />
      <Canvas />
      <StatusBar />
    </div>
  );
}
